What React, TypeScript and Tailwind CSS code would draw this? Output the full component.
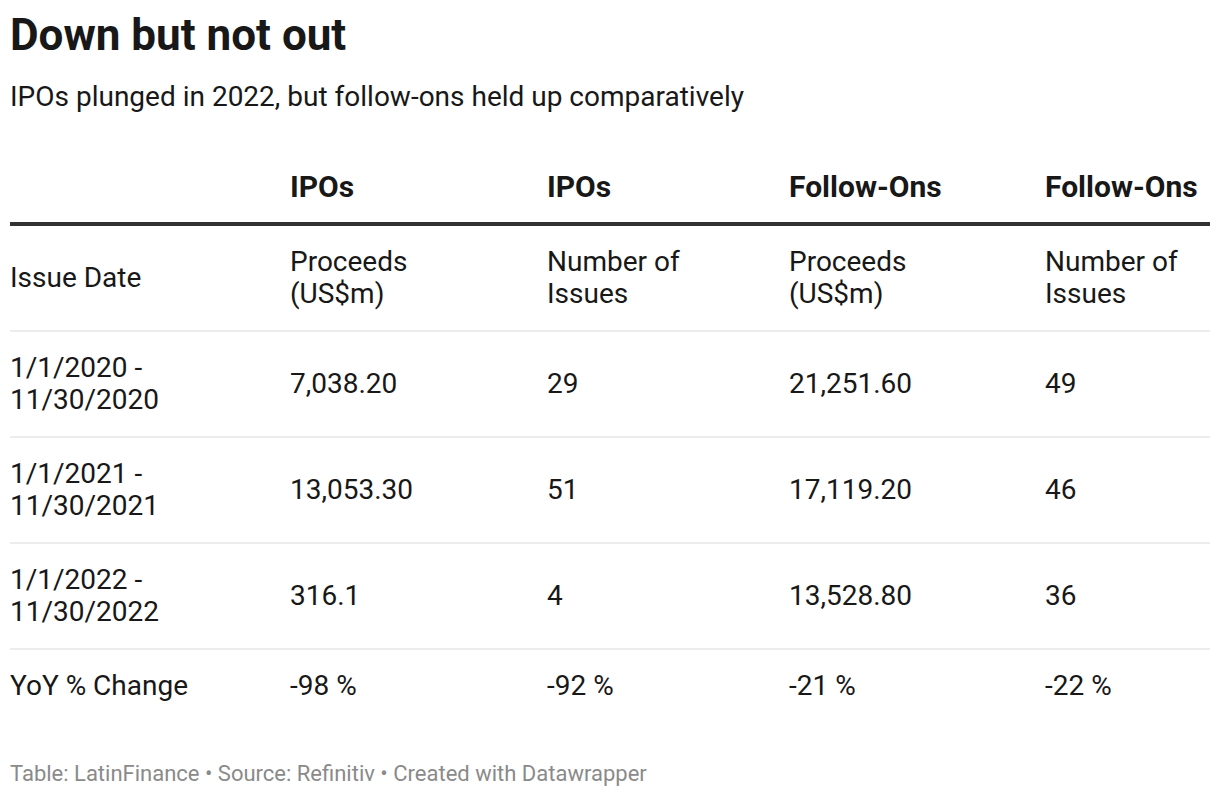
const rows = [
  { date: ['1/1/2020 -', '11/30/2020'], ipoP: '7,038.20', ipoN: '29', foP: '21,251.60', foN: '49' },
  { date: ['1/1/2021 -', '11/30/2021'], ipoP: '13,053.30', ipoN: '51', foP: '17,119.20', foN: '46' },
  { date: ['1/1/2022 -', '11/30/2022'], ipoP: '316.1', ipoN: '4', foP: '13,528.80', foN: '36' },
];

const cols = ['w-[280px]', 'w-[257px]', 'w-[242px]', 'w-[256px]', 'w-[165px]'];

export default function App() {
  return (
    <div className="w-[1220px] h-[798px] bg-white px-[10px] pt-[9px] text-[#181818] font-['Roboto',sans-serif]">
      <h1 className="text-[44px] leading-[52px] font-bold">Down but not out</h1>
      <p className="mt-[20px] text-[28px] leading-[32px]">IPOs plunged in 2022, but follow-ons held up comparatively</p>

      <table className="mt-[58px] w-[1200px] table-fixed border-collapse text-[28px] leading-[32px]">
        <colgroup>
          {cols.map((c, i) => (
            <col key={i} className={c} />
          ))}
        </colgroup>
        <thead>
          <tr className="border-b-4 border-[#333333]">
            <th></th>
            <th className="text-left font-bold text-[30px] pb-[19px] pt-0">IPOs</th>
            <th className="text-left font-bold text-[30px] pb-[19px] pt-0">IPOs</th>
            <th className="text-left font-bold text-[30px] pb-[19px] pt-0">Follow-Ons</th>
            <th className="text-left font-bold text-[30px] pb-[19px] pt-0">Follow-Ons</th>
          </tr>
        </thead>
        <tbody>
          <tr className="border-b-2 border-[#ececec]">
            <td className="py-[20px] align-middle">Issue Date</td>
            <td className="py-[20px] align-middle">Proceeds<br />(US$m)</td>
            <td className="py-[20px] align-middle">Number of<br />Issues</td>
            <td className="py-[20px] align-middle">Proceeds<br />(US$m)</td>
            <td className="py-[20px] align-middle">Number of<br />Issues</td>
          </tr>
          {rows.map((r) => (
            <tr key={r.date[1]} className="border-b-2 border-[#ececec]">
              <td className="py-[20px] align-middle">{r.date[0]}<br />{r.date[1]}</td>
              <td className="py-[20px] align-middle">{r.ipoP}</td>
              <td className="py-[20px] align-middle">{r.ipoN}</td>
              <td className="py-[20px] align-middle">{r.foP}</td>
              <td className="py-[20px] align-middle">{r.foN}</td>
            </tr>
          ))}
          <tr>
            <td className="py-[20px]">YoY % Change</td>
            <td className="py-[20px]">-98 %</td>
            <td className="py-[20px]">-92 %</td>
            <td className="py-[20px]">-21 %</td>
            <td className="py-[20px]">-22 %</td>
          </tr>
        </tbody>
      </table>

      <p className="mt-[38px] text-[22px] leading-[28px] text-[#8a8a8a]">
        Table: LatinFinance • Source: Refinitiv • Created with Datawrapper
      </p>
    </div>
  );
}
